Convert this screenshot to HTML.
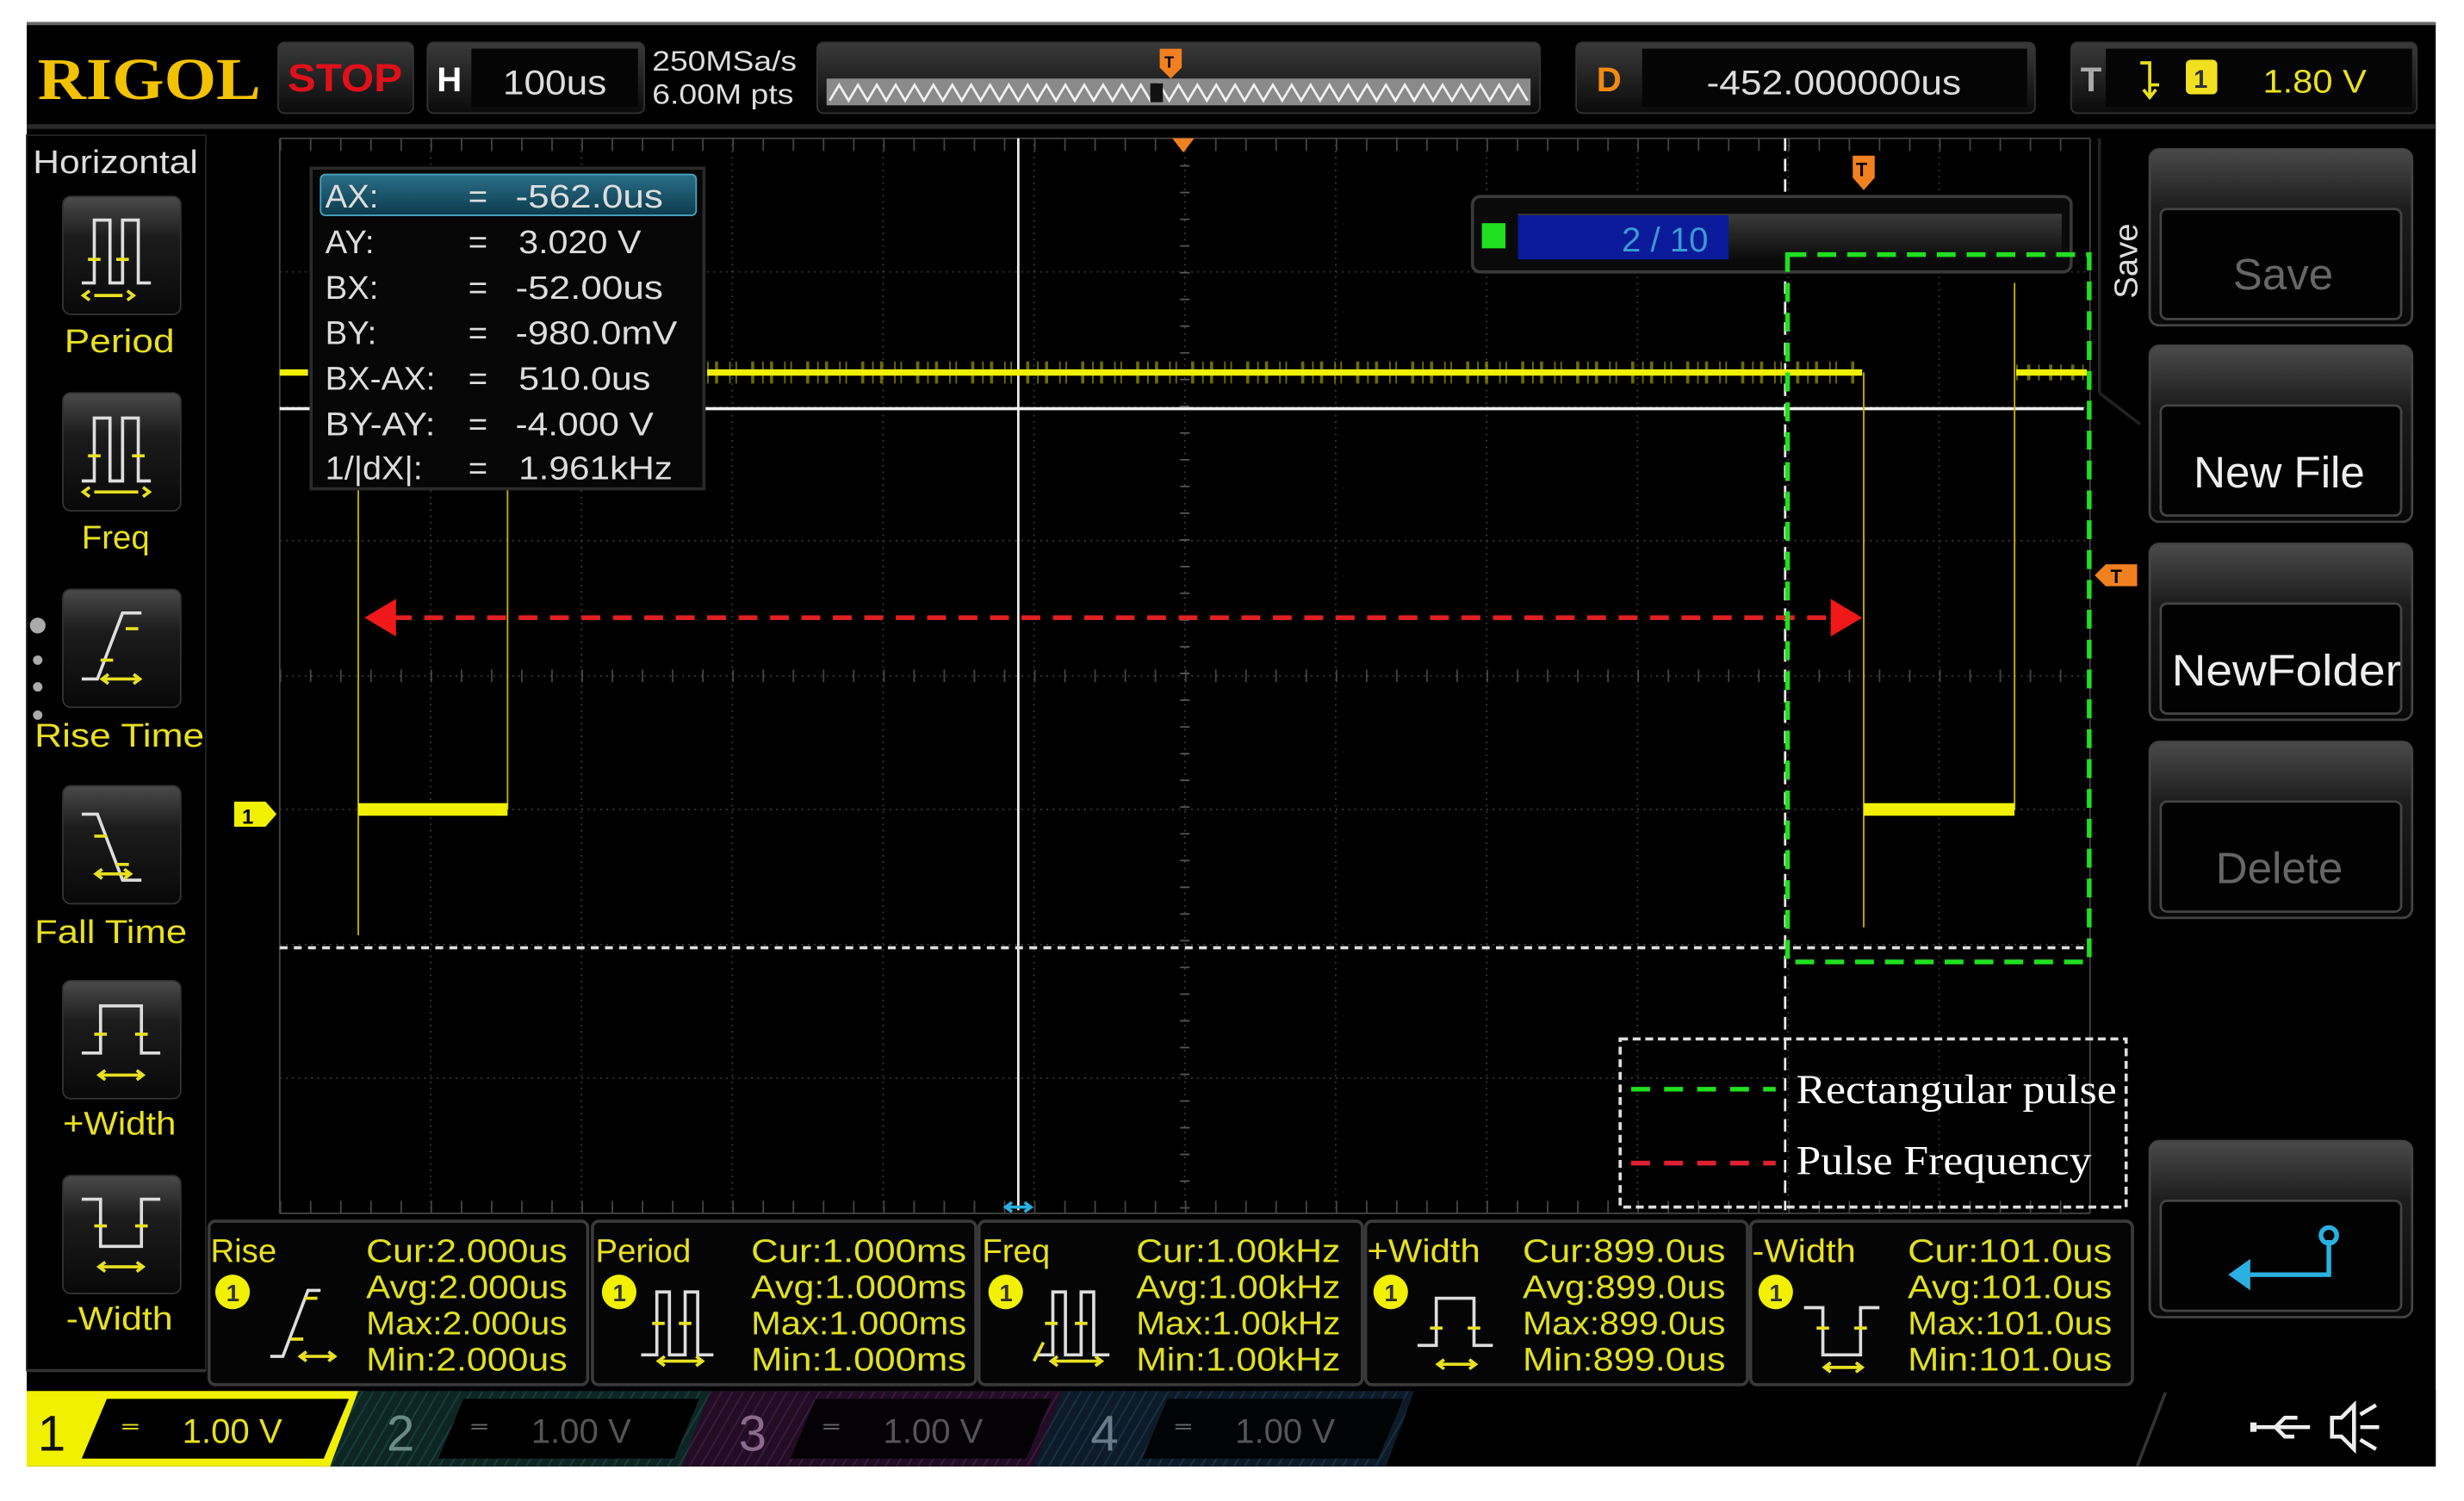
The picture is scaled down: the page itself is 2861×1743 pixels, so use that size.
<!DOCTYPE html>
<html><head><meta charset="utf-8"><style>
html,body{margin:0;padding:0;background:#fff;width:2861px;height:1743px;overflow:hidden}
svg{display:block}
text{font-family:"Liberation Sans",sans-serif}
text.serif{font-family:"Liberation Serif",serif}
</style></head><body>
<svg width="2861" height="1743" viewBox="0 0 1568 955" preserveAspectRatio="none" xmlns="http://www.w3.org/2000/svg">
<defs>
<linearGradient id="btn" x1="0" y1="0" x2="0" y2="1"><stop offset="0" stop-color="#4a4a4a"/><stop offset="0.35" stop-color="#1c1c1c"/><stop offset="1" stop-color="#080808"/></linearGradient>
<linearGradient id="bar" x1="0" y1="0" x2="0" y2="1"><stop offset="0" stop-color="#3a3a3a"/><stop offset="1" stop-color="#0a0a0a"/></linearGradient>
<linearGradient id="teal" x1="0" y1="0" x2="0" y2="1"><stop offset="0" stop-color="#2a6f88"/><stop offset="1" stop-color="#0c3a4c"/></linearGradient>
<pattern id="h2" width="6" height="6" patternUnits="userSpaceOnUse" patternTransform="rotate(30)"><rect width="6" height="6" fill="#0d2624"/><line x1="0" y1="0" x2="0" y2="6" stroke="#1a3e3a" stroke-width="2"/></pattern>
<pattern id="h3" width="6" height="6" patternUnits="userSpaceOnUse" patternTransform="rotate(30)"><rect width="6" height="6" fill="#220d24"/><line x1="0" y1="0" x2="0" y2="6" stroke="#3c1a40" stroke-width="2"/></pattern>
<pattern id="h4" width="6" height="6" patternUnits="userSpaceOnUse" patternTransform="rotate(30)"><rect width="6" height="6" fill="#0d1a28"/><line x1="0" y1="0" x2="0" y2="6" stroke="#1a3048" stroke-width="2"/></pattern>
</defs>
<rect width="1568" height="955" fill="#fff"/>
<rect x="17" y="14" width="1533" height="919" fill="#000"/>
<rect x="17" y="14" width="1533" height="2" fill="#666"/>

<!-- top bar -->
<text class="serif" x="24" y="63" font-weight="bold" font-size="38" fill="#f2c200" textLength="142" lengthAdjust="spacingAndGlyphs">RIGOL</text>
<rect x="177" y="27" width="86" height="45" rx="4" fill="url(#bar)" stroke="#333"/>
<text x="183" y="58" font-weight="bold" font-size="25" fill="#e0101a" textLength="73" lengthAdjust="spacingAndGlyphs">STOP</text>
<rect x="272" y="27" width="138" height="45" rx="4" fill="url(#bar)" stroke="#333"/>
<rect x="300" y="31" width="106" height="37" fill="#050505"/>
<text x="278" y="58" font-weight="bold" font-size="22" fill="#fff">H</text>
<text x="320" y="60" font-size="22" fill="#ddd" textLength="66" lengthAdjust="spacingAndGlyphs">100us</text>
<text x="415" y="45" font-size="18" fill="#ddd" textLength="92" lengthAdjust="spacingAndGlyphs">250MSa/s</text>
<text x="415" y="66" font-size="18" fill="#ddd" textLength="90" lengthAdjust="spacingAndGlyphs">6.00M pts</text>
<rect x="520" y="27" width="460" height="45" rx="4" fill="url(#bar)" stroke="#333"/>
<rect x="526" y="50" width="448" height="17" fill="#8a8a8a"/>
<polyline points="528,64 534,54 540,64 546,54 552,64 558,54 564,64 570,54 576,64 582,54 588,64 594,54 600,64 606,54 612,64 618,54 624,64 630,54 636,64 642,54 648,64 654,54 660,64 666,54 672,64 678,54 684,64 690,54 696,64 702,54 708,64 714,54 720,64 726,54 732,64 738,54 744,64 750,54 756,64 762,54 768,64 774,54 780,64 786,54 792,64 798,54 804,64 810,54 816,64 822,54 828,64 834,54 840,64 846,54 852,64 858,54 864,64 870,54 876,64 882,54 888,64 894,54 900,64 906,54 912,64 918,54 924,64 930,54 936,64 942,54 948,64 954,54 960,64 966,54 972,64" fill="none" stroke="#f0f0f0" stroke-width="1.5"/>
<rect x="732" y="53" width="8" height="12" fill="#111"/>
<path d="M738,31 h14 v12 l-7,7 l-7,-7z" fill="#f08020"/>
<text x="741" y="43" font-size="10" font-weight="bold" fill="#000">T</text>
<rect x="1003" y="27" width="292" height="45" rx="4" fill="url(#bar)" stroke="#333"/>
<rect x="1045" y="31" width="245" height="37" fill="#050505"/>
<text x="1016" y="58" font-weight="bold" font-size="22" fill="#f08a10">D</text>
<text x="1086" y="60" font-size="22" fill="#ddd" textLength="162" lengthAdjust="spacingAndGlyphs">-452.000000us</text>
<rect x="1318" y="27" width="220" height="45" rx="4" fill="url(#bar)" stroke="#333"/>
<rect x="1340" y="31" width="195" height="37" fill="#050505"/>
<text x="1324" y="58" font-weight="bold" font-size="22" fill="#aaa">T</text>
<path d="M1362,40 h6 v14 h6 M1368,48 v14 M1364,57 l4,5 l4,-5" fill="none" stroke="#e8e020" stroke-width="2"/>
<rect x="1391" y="38" width="20" height="22" rx="3" fill="#f0e020"/>
<text x="1396" y="56" font-size="16" font-weight="bold" fill="#333">1</text>
<text x="1440" y="59" font-size="21" fill="#e8e020" textLength="66" lengthAdjust="spacingAndGlyphs">1.80 V</text>
<rect x="17" y="79" width="1533" height="3" fill="#2a2a2a"/>

<!-- left sidebar -->
<rect x="17" y="86" width="114" height="786" fill="#000" stroke="#222"/>
<text x="21" y="110" font-size="21" fill="#ddd" textLength="105" lengthAdjust="spacingAndGlyphs">Horizontal</text>
<g fill="url(#btn)" stroke="#333">
<rect x="40" y="125" width="75" height="75" rx="5"/>
<rect x="40" y="250" width="75" height="75" rx="5"/>
<rect x="40" y="375" width="75" height="75" rx="5"/>
<rect x="40" y="500" width="75" height="75" rx="5"/>
<rect x="40" y="624" width="75" height="75" rx="5"/>
<rect x="40" y="748" width="75" height="75" rx="5"/>
</g>
<g fill="none" stroke="#ddd" stroke-width="2">
<path d="M52,180 h8 v-40 h10 v40 h8 v-40 h10 v40 h8"/>
<path d="M52,306 h8 v-40 h10 v40 h8 v-40 h10 v40 h8"/>
<path d="M52,432 h10 l16,-42 h12"/>
<path d="M52,518 h10 l16,42 h12"/>
<path d="M52,670 h12 v-30 h26 v30 h12"/>
<path d="M52,763 h12 v30 h26 v-30 h12"/>
</g>
<g fill="none" stroke="#e8e020" stroke-width="2">
<path d="M60,188 h18 M57,185 l-4,3 l4,3 M81,185 l4,3 l-4,3 M56,165 h8 M74,165 h8"/>
<path d="M60,313 h28 M57,310 l-4,3 l4,3 M91,310 l4,3 l-4,3 M56,290 h8 M84,290 h8"/>
<path d="M66,432 h22 M69,429 l-4,3 l4,3 M85,429 l4,3 l-4,3 M64,420 h8 M80,400 h8"/>
<path d="M62,556 h20 M65,553 l-4,3 l4,3 M79,553 l4,3 l-4,3 M60,532 h8 M74,550 h8"/>
<path d="M64,684 h26 M67,681 l-4,3 l4,3 M87,681 l4,3 l-4,3 M60,658 h8 M86,658 h8"/>
<path d="M64,806 h26 M67,803 l-4,3 l4,3 M87,803 l4,3 l-4,3 M60,780 h8 M86,780 h8"/>
</g>
<g fill="#e8e020" font-size="21">
<text x="41" y="224" textLength="70" lengthAdjust="spacingAndGlyphs">Period</text>
<text x="52" y="349">Freq</text>
<text x="22" y="475" textLength="108" lengthAdjust="spacingAndGlyphs">Rise Time</text>
<text x="22" y="600" textLength="97" lengthAdjust="spacingAndGlyphs">Fall Time</text>
<text x="40" y="722" textLength="72" lengthAdjust="spacingAndGlyphs">+Width</text>
<text x="42" y="846" textLength="68" lengthAdjust="spacingAndGlyphs">-Width</text>
</g>
<g fill="#aaa"><circle cx="24" cy="398" r="5"/><circle cx="24" cy="420" r="3"/><circle cx="24" cy="437" r="3"/><circle cx="24" cy="455" r="3"/></g>

<!-- grid -->
<g stroke="#3a3a3a" stroke-width="1" stroke-dasharray="1 3">
<line x1="274" y1="88" x2="274" y2="772"/><line x1="370" y1="88" x2="370" y2="772"/><line x1="466" y1="88" x2="466" y2="772"/><line x1="562" y1="88" x2="562" y2="772"/><line x1="658" y1="88" x2="658" y2="772"/><line x1="754" y1="88" x2="754" y2="772"/><line x1="850" y1="88" x2="850" y2="772"/><line x1="946" y1="88" x2="946" y2="772"/><line x1="1042" y1="88" x2="1042" y2="772"/><line x1="1138" y1="88" x2="1138" y2="772"/><line x1="1234" y1="88" x2="1234" y2="772"/>
<line x1="178" y1="173" x2="1330" y2="173"/><line x1="178" y1="259" x2="1330" y2="259"/><line x1="178" y1="344" x2="1330" y2="344"/><line x1="178" y1="430" x2="1330" y2="430"/><line x1="178" y1="515" x2="1330" y2="515"/><line x1="178" y1="601" x2="1330" y2="601"/><line x1="178" y1="686" x2="1330" y2="686"/>
</g>
<g stroke="#444" stroke-width="1">
<line x1="178" y1="88" x2="178" y2="772"/><line x1="1330" y1="88" x2="1330" y2="772"/>
<line x1="178" y1="88" x2="1330" y2="88"/><line x1="178" y1="772" x2="1330" y2="772"/>
</g>
<line x1="178" y1="430" x2="1330" y2="430" stroke="#555" stroke-width="8" stroke-dasharray="1 18.2" opacity="0.8"/>
<line x1="754" y1="88" x2="754" y2="772" stroke="#555" stroke-width="6" stroke-dasharray="1 16"/>
<line x1="178" y1="92" x2="1330" y2="92" stroke="#444" stroke-width="8" stroke-dasharray="1 18.2"/>
<line x1="178" y1="768" x2="1330" y2="768" stroke="#444" stroke-width="8" stroke-dasharray="1 18.2"/>
<path d="M746,88 h14 l-7,9z" fill="#f08020"/>

<!-- cursors -->
<line x1="648" y1="88" x2="648" y2="770" stroke="#eee" stroke-width="1.5"/>
<line x1="178" y1="260" x2="1326" y2="260" stroke="#eee" stroke-width="2"/>
<line x1="178" y1="603" x2="1326" y2="603" stroke="#ddd" stroke-width="2" stroke-dasharray="5 4"/>
<line x1="1136" y1="88" x2="1136" y2="770" stroke="#eee" stroke-width="1.5" stroke-dasharray="8 5"/>
<path d="M641,768 h14 M644,765 l-4,3 l4,3 M652,765 l4,3 l-4,3" stroke="#2ab0e0" stroke-width="2" fill="none"/>

<!-- trace -->
<g stroke="#c8b400" stroke-width="1">
<line x1="228" y1="237" x2="228" y2="595"/><line x1="323" y1="237" x2="323" y2="515"/><line x1="1186" y1="237" x2="1186" y2="590"/><line x1="1282" y1="180" x2="1282" y2="515"/>
</g>
<g stroke="#f0f000">
<line x1="178" y1="237" x2="196" y2="237" stroke-width="4"/>
<line x1="450" y1="237" x2="1185" y2="237" stroke-width="4"/>
<line x1="1283" y1="237" x2="1328" y2="237" stroke-width="4"/>
<line x1="450" y1="237" x2="1185" y2="237" stroke-width="14" stroke-dasharray="1 4 2 7 1 3 1 9 2 5" opacity="0.45"/>
<line x1="1283" y1="237" x2="1328" y2="237" stroke-width="10" stroke-dasharray="1 6 2 5" opacity="0.45"/>
<line x1="228" y1="515" x2="323" y2="515" stroke-width="8"/>
<line x1="1186" y1="515" x2="1282" y2="515" stroke-width="8"/>
</g>
<path d="M149,510 h20 l7,8 l-7,8 h-20z" fill="#f0f000"/>
<text x="154" y="524" font-size="13" font-weight="bold" fill="#000">1</text>

<!-- cursor box -->
<rect x="198" y="107" width="250" height="204" fill="#060606" stroke="#2a2a2a" stroke-width="2"/>
<rect x="204" y="111" width="239" height="26" rx="3" fill="url(#teal)" stroke="#4aa0c0"/>
<g font-size="21" fill="#ddd">
<text x="207" y="132">AX:</text><text x="298" y="132">=</text><text x="328" y="132" textLength="94" lengthAdjust="spacingAndGlyphs">-562.0us</text>
<text x="207" y="161">AY:</text><text x="298" y="161">=</text><text x="330" y="161" textLength="78" lengthAdjust="spacingAndGlyphs">3.020 V</text>
<text x="207" y="190">BX:</text><text x="298" y="190">=</text><text x="328" y="190" textLength="94" lengthAdjust="spacingAndGlyphs">-52.00us</text>
<text x="207" y="219">BY:</text><text x="298" y="219">=</text><text x="328" y="219" textLength="103" lengthAdjust="spacingAndGlyphs">-980.0mV</text>
<text x="207" y="248" textLength="70" lengthAdjust="spacingAndGlyphs">BX-AX:</text><text x="298" y="248">=</text><text x="330" y="248" textLength="84" lengthAdjust="spacingAndGlyphs">510.0us</text>
<text x="207" y="277" textLength="70" lengthAdjust="spacingAndGlyphs">BY-AY:</text><text x="298" y="277">=</text><text x="328" y="277" textLength="88" lengthAdjust="spacingAndGlyphs">-4.000 V</text>
<text x="207" y="305" textLength="62" lengthAdjust="spacingAndGlyphs">1/|dX|:</text><text x="298" y="305">=</text><text x="330" y="305" textLength="98" lengthAdjust="spacingAndGlyphs">1.961kHz</text>
</g>

<!-- red arrow -->
<line x1="250" y1="393" x2="1162" y2="393" stroke="#e02020" stroke-width="3" stroke-dasharray="12 8"/>
<path d="M232,393 l20,-12 v24z" fill="#f01818"/>
<path d="M1185,393 l-20,-12 v24z" fill="#f01818"/>

<!-- 2/10 widget -->
<rect x="937" y="125" width="381" height="48" rx="5" fill="#0a0a0a" stroke="#3a3a3a" stroke-width="2"/>
<rect x="966" y="136" width="346" height="30" fill="url(#bar)"/>
<rect x="966" y="137" width="134" height="28" fill="#0a1a9a"/>
<rect x="943" y="142" width="15" height="16" fill="#20e020"/>
<text x="1032" y="160" font-size="22" fill="#3a9ad0">2 / 10</text>
<path d="M1179,99 h14 v14 l-7,8 l-7,-8z" fill="#f08020"/>
<text x="1181" y="112" font-size="12" font-weight="bold" fill="#000">T</text>
<path d="M1360,359 h-20 l-7,7 l7,7 h20z" fill="#f08020"/>
<text x="1343" y="371" font-size="12" font-weight="bold" fill="#000">T</text>

<!-- green rect -->
<rect x="1137.5" y="162" width="192" height="450" fill="none" stroke="#20e020" stroke-width="3" stroke-dasharray="12 7"/>

<!-- legend -->
<rect x="1031" y="661" width="322" height="107" fill="none" stroke="#ddd" stroke-width="2" stroke-dasharray="5 3"/>
<line x1="1038" y1="693" x2="1130" y2="693" stroke="#20e020" stroke-width="3" stroke-dasharray="12 9"/>
<line x1="1038" y1="740" x2="1130" y2="740" stroke="#e02030" stroke-width="3" stroke-dasharray="12 9"/>
<g font-size="26" fill="#fff">
<text class="serif" x="1143" y="702" textLength="204" lengthAdjust="spacingAndGlyphs">Rectangular pulse</text>
<text class="serif" x="1143" y="747" textLength="188" lengthAdjust="spacingAndGlyphs">Pulse Frequency</text>
</g>

<!-- right panel -->
<line x1="1336" y1="88" x2="1336" y2="250" stroke="#222" stroke-width="2"/>
<line x1="1336" y1="250" x2="1362" y2="270" stroke="#222" stroke-width="2"/>
<text transform="translate(1360,190) rotate(-90)" font-size="21" fill="#ddd">Save</text>
<g stroke="#444" stroke-width="1.5">
<rect x="1368" y="95" width="167" height="112" rx="6" fill="url(#btn)"/>
<rect x="1375" y="133" width="153" height="70" rx="4" fill="#020202"/>
<rect x="1368" y="220" width="167" height="112" rx="6" fill="url(#btn)"/>
<rect x="1375" y="258" width="153" height="70" rx="4" fill="#020202"/>
<rect x="1368" y="346" width="167" height="112" rx="6" fill="url(#btn)"/>
<rect x="1375" y="384" width="153" height="70" rx="4" fill="#020202"/>
<rect x="1368" y="472" width="167" height="112" rx="6" fill="url(#btn)"/>
<rect x="1375" y="510" width="153" height="70" rx="4" fill="#020202"/>
<rect x="1368" y="726" width="167" height="112" rx="6" fill="url(#btn)"/>
<rect x="1375" y="764" width="153" height="70" rx="4" fill="#020202"/>
</g>
<g font-size="28">
<text x="1421" y="184" fill="#666">Save</text>
<text x="1396" y="310" fill="#eee">New File</text>
<text x="1382" y="436" fill="#eee" textLength="146" lengthAdjust="spacingAndGlyphs">NewFolder</text>
<text x="1410" y="562" fill="#666">Delete</text>
</g>
<path d="M1482,789 v22 h-50" fill="none" stroke="#2ab0e0" stroke-width="3"/>
<circle cx="1482" cy="786" r="5" fill="none" stroke="#2ab0e0" stroke-width="3"/>
<path d="M1418,811 l14,-10 v20z" fill="#2ab0e0"/>

<!-- measurement panels -->
<g fill="#050505" stroke="#3a3a3a" stroke-width="2">
<rect x="133" y="777" width="241" height="104" rx="4"/>
<rect x="377" y="777" width="244" height="104" rx="4"/>
<rect x="623" y="777" width="244" height="104" rx="4"/>
<rect x="869" y="777" width="243" height="104" rx="4"/>
<rect x="1114" y="777" width="243" height="104" rx="4"/>
</g>
<line x1="17" y1="872" x2="131" y2="872" stroke="#333" stroke-width="2"/>
<g fill="#f0f000">
<circle cx="148" cy="822" r="11"/><circle cx="394" cy="822" r="11"/><circle cx="640" cy="822" r="11"/><circle cx="885" cy="822" r="11"/><circle cx="1130" cy="822" r="11"/>
</g>
<g font-size="15" font-weight="bold" fill="#333">
<text x="144" y="828">1</text><text x="390" y="828">1</text><text x="636" y="828">1</text><text x="881" y="828">1</text><text x="1126" y="828">1</text>
</g>
<g font-size="21" fill="#e8e020">
<text x="134" y="803">Rise</text>
<text x="379" y="803">Period</text>
<text x="625" y="803">Freq</text>
<text x="870" y="803" textLength="72" lengthAdjust="spacingAndGlyphs">+Width</text>
<text x="1115" y="803" textLength="66" lengthAdjust="spacingAndGlyphs">-Width</text>
</g>
<g fill="none" stroke="#ddd" stroke-width="2">
<path d="M172,863 h8 l16,-42 h8"/>
<path d="M408,862 h10 v-40 h8 v40 h10 v-40 h8 v40 h10"/>
<path d="M660,862 h10 v-40 h8 v40 h10 v-40 h8 v40 h10"/>
<path d="M902,856 h12 v-30 h24 v30 h12"/>
<path d="M1148,832 h12 v30 h24 v-30 h12"/>
</g>
<g fill="none" stroke="#e8e020" stroke-width="2">
<path d="M192,863 h20 M195,860 l-4,3 l4,3 M209,860 l4,3 l-4,3 M185,852 h8 M194,826 h8"/>
<path d="M420,866 h26 M423,863 l-4,3 l4,3 M443,863 l4,3 l-4,3 M415,842 h8 M432,842 h8"/>
<path d="M670,866 h30 M673,863 l-4,3 l4,3 M697,863 l4,3 l-4,3 M665,842 h8 M684,842 h8 M658,866 l6,-12"/>
<path d="M916,868 h22 M919,865 l-4,3 l4,3 M935,865 l4,3 l-4,3 M910,845 h8 M934,845 h8"/>
<path d="M1162,870 h22 M1165,867 l-4,3 l4,3 M1181,867 l4,3 l-4,3 M1156,845 h8 M1180,845 h8"/>
</g>
<g font-size="21" fill="#e0e020">
<g transform="translate(233,0)"><text y="803" textLength="128" lengthAdjust="spacingAndGlyphs">Cur:2.000us</text><text y="826" textLength="128" lengthAdjust="spacingAndGlyphs">Avg:2.000us</text><text y="849" textLength="128" lengthAdjust="spacingAndGlyphs">Max:2.000us</text><text y="872" textLength="128" lengthAdjust="spacingAndGlyphs">Min:2.000us</text></g>
<g transform="translate(478,0)"><text y="803" textLength="137" lengthAdjust="spacingAndGlyphs">Cur:1.000ms</text><text y="826" textLength="137" lengthAdjust="spacingAndGlyphs">Avg:1.000ms</text><text y="849" textLength="137" lengthAdjust="spacingAndGlyphs">Max:1.000ms</text><text y="872" textLength="137" lengthAdjust="spacingAndGlyphs">Min:1.000ms</text></g>
<g transform="translate(723,0)"><text y="803" textLength="130" lengthAdjust="spacingAndGlyphs">Cur:1.00kHz</text><text y="826" textLength="130" lengthAdjust="spacingAndGlyphs">Avg:1.00kHz</text><text y="849" textLength="130" lengthAdjust="spacingAndGlyphs">Max:1.00kHz</text><text y="872" textLength="130" lengthAdjust="spacingAndGlyphs">Min:1.00kHz</text></g>
<g transform="translate(969,0)"><text y="803" textLength="129" lengthAdjust="spacingAndGlyphs">Cur:899.0us</text><text y="826" textLength="129" lengthAdjust="spacingAndGlyphs">Avg:899.0us</text><text y="849" textLength="129" lengthAdjust="spacingAndGlyphs">Max:899.0us</text><text y="872" textLength="129" lengthAdjust="spacingAndGlyphs">Min:899.0us</text></g>
<g transform="translate(1214,0)"><text y="803" textLength="130" lengthAdjust="spacingAndGlyphs">Cur:101.0us</text><text y="826" textLength="130" lengthAdjust="spacingAndGlyphs">Avg:101.0us</text><text y="849" textLength="130" lengthAdjust="spacingAndGlyphs">Max:101.0us</text><text y="872" textLength="130" lengthAdjust="spacingAndGlyphs">Min:101.0us</text></g>
</g>

<!-- channel bar -->
<rect x="17" y="884" width="1533" height="49" fill="#000"/>
<path d="M17,885 H230 L212,933 H17z" fill="#f0f000"/>
<path d="M68,890 H222 L206,928 H52z" fill="#000"/>
<text x="24" y="923" font-size="32" fill="#111">1</text>
<text x="78" y="912" font-size="14" fill="#e8e020">═</text>
<text x="116" y="918" font-size="22" fill="#e8e020">1.00 V</text>
<path d="M228,885 H452 L434,933 H210z" fill="url(#h2)"/>
<path d="M295,890 H445 L429,928 H279z" fill="#000"/>
<text x="246" y="923" font-size="32" fill="#6a8a88">2</text>
<text x="300" y="912" font-size="14" fill="#666">═</text>
<text x="338" y="918" font-size="22" fill="#555">1.00 V</text>
<path d="M452,885 H676 L658,933 H434z" fill="url(#h3)"/>
<path d="M519,890 H669 L653,928 H503z" fill="#050205"/>
<text x="470" y="923" font-size="32" fill="#8a6a8a">3</text>
<text x="524" y="912" font-size="14" fill="#666">═</text>
<text x="562" y="918" font-size="22" fill="#555">1.00 V</text>
<path d="M676,885 H900 L882,933 H658z" fill="url(#h4)"/>
<path d="M743,890 H893 L877,928 H727z" fill="#020305"/>
<text x="694" y="923" font-size="32" fill="#6a7a8a">4</text>
<text x="748" y="912" font-size="14" fill="#666">═</text>
<text x="786" y="918" font-size="22" fill="#555">1.00 V</text>
<line x1="1378" y1="886" x2="1360" y2="933" stroke="#333" stroke-width="2"/>
<g stroke="#eee" stroke-width="2.5" fill="none">
<path d="M1436,908 h34 M1448,908 l6,-6 h8 M1448,908 l6,6 h6"/>
<path d="M1484,902 h6 l8,-8 v28 l-8,-8 h-6z M1502,900 l10,-6 M1502,908 h12 M1502,916 l10,6"/>
</g>
<path d="M1436,908 l-4,0" stroke="#eee" stroke-width="6"/>
</svg>
</body></html>
